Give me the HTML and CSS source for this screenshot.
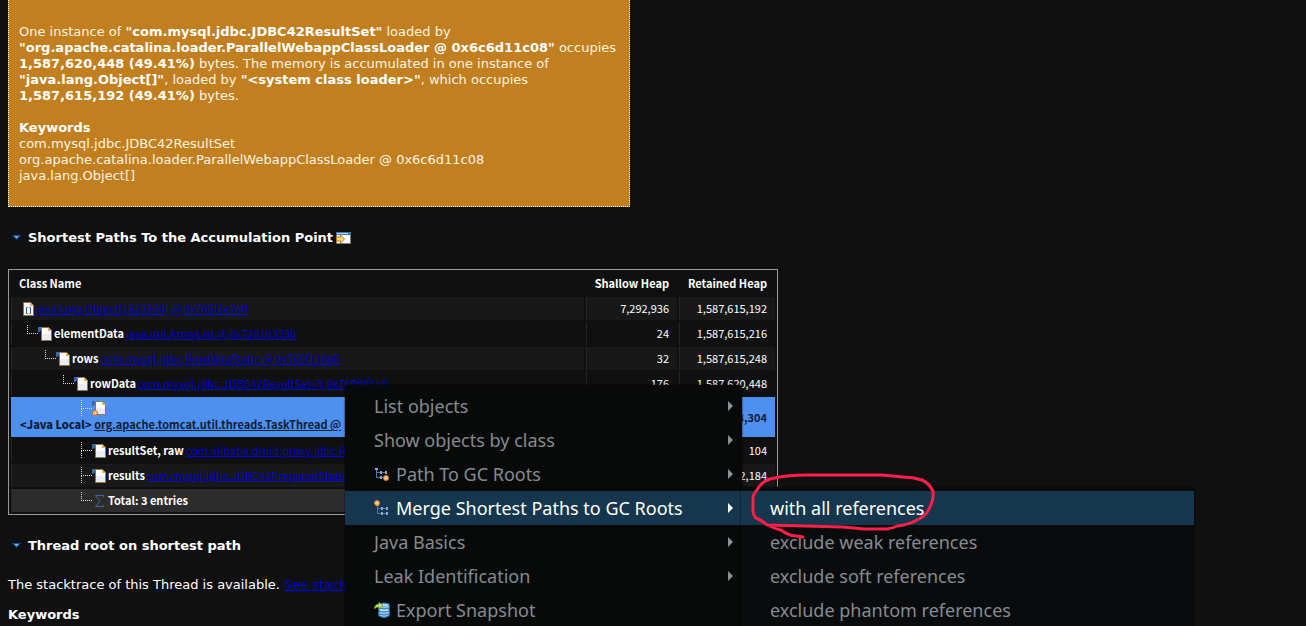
FILE: index.html
```
<!DOCTYPE html>
<html lang="en">
<head>
<meta charset="utf-8">
<title>Leak Suspects</title>
<link rel="stylesheet" href="styles.css">
</head>
<body>
<svg class="defs" aria-hidden="true">
  <symbol id="page" viewBox="0 0 18 16">
    <path d="M2 1h6v1L3 6H2z" fill="#2f6ca8"/>
    <path d="M5.500 1.500h7l3 3v10h-10z" fill="#e9edf8" stroke="#8d793f"/>
    <path d="M6 2h6v3h3v3H6z" fill="#fff"/>
    <path d="M12 1l4 4h-4z" fill="#e3b04b"/>
  </symbol>
  <symbol id="array" viewBox="0 0 18 16">
    <path d="M5.500 1.500h7l3 3v10h-10z" fill="#f4f6fc" stroke="#8d793f"/>
    <path d="M12 1l4 4h-4z" fill="#e3b04b"/>
    <path d="M9.500 6.500h-1v6h1M11.500 6.500h1v6h-1" fill="none" stroke="#1f5c99"/>
  </symbol>
  <symbol id="local" viewBox="0 0 18 16">
    <use href="#page"/>
    <circle cx="5" cy="13" r="2.500" fill="#ffc58a" stroke="#c96a14"/>
  </symbol>
  <symbol id="sigma" viewBox="0 0 18 16">
    <path d="M13.500 4V2.500h-8L10 8l-4.500 5.500h8V12" fill="none" stroke="#39699c"/>
  </symbol>
  <symbol id="twist" viewBox="0 0 9 5">
    <path d="M0 0h9L4.500 5z" fill="#0e4fa8"/><path d="M2 1h5L4.500 3.500z" fill="#62b4ea"/>
  </symbol>
  <symbol id="nodes" viewBox="0 0 12 12">
    <path d="M1.500 1v8.500h9M1.500 4.500h9" fill="none" stroke="#5c78a8"/>
    <path d="M0 0h3v2H0zM5 3h2v3H5zM10 3h2v3h-2zM5 8h2v3H5zM10 8h2v3h-2z" fill="#8ba4d0"/>
  </symbol>
</svg>

<main class="report">
  <section class="suspect">
    <p>One instance of <strong>"com.mysql.jdbc.JDBC42ResultSet"</strong> loaded by <strong>"org.apache.catalina.loader.ParallelWebappClassLoader @ 0x6c6d11c08"</strong> occupies <strong>1,587,620,448 (49.41%)</strong> bytes. The memory is accumulated in one instance of <strong>"java.lang.Object[]"</strong>, loaded by <strong>"&lt;system class loader&gt;"</strong>, which occupies <strong>1,587,615,192 (49.41%)</strong> bytes.</p>
    <p><strong>Keywords</strong><br>com.mysql.jdbc.JDBC42ResultSet<br>org.apache.catalina.loader.ParallelWebappClassLoader @ 0x6c6d11c08<br>java.lang.Object[]</p>
  </section>

  <h2 class="heading"><svg class="twist"><use href="#twist"/></svg>Shortest Paths To the Accumulation Point
    <svg class="open" viewBox="0 0 15 12"><path d="M.500.500h14v11H.500z" fill="#fff" stroke="#777b72"/><path d="M0 0h15v3H0z" fill="#3f78b9"/><path d="M1 1h11v1H1z" fill="#b9d8f4"/><path d="M.500 5v4h4v2l4-4-4-4v2z" fill="#ffd767" stroke="#b87914"/></svg>
  </h2>

  <table class="paths">
    <colgroup><col><col class="shallow"><col class="retained"></colgroup>
    <thead><tr><th>Class Name</th><th>Shallow Heap</th><th>Retained Heap</th></tr></thead>
    <tbody>
      <tr class="odd"><td><div class="node"><svg class="icon"><use href="#array"/></svg><a href="#o1">java.lang.Object[1823230] @ 0x765f1e7c0</a></div></td><td>7,292,936</td><td>1,587,615,192</td></tr>
      <tr><td><div class="node"><i class="elbow"></i><svg class="icon"><use href="#page"/></svg><b>elementData</b> <a href="#o2">java.util.ArrayList @ 0x726103330</a></div></td><td>24</td><td>1,587,615,216</td></tr>
      <tr class="odd"><td><div class="node"><i class="gap"></i><i class="elbow"></i><svg class="icon"><use href="#page"/></svg><b>rows</b> <a href="#o3">com.mysql.jdbc.RowDataStatic @ 0x765f110a0</a></div></td><td>32</td><td>1,587,615,248</td></tr>
      <tr><td><div class="node"><i class="gap"></i><i class="gap"></i><i class="elbow"></i><svg class="icon"><use href="#page"/></svg><b>rowData</b> <a href="#o4">com.mysql.jdbc.JDBC42ResultSet @ 0x765f0f1c8</a></div></td><td>176</td><td>1,587,620,448</td></tr>
      <tr class="selected"><td><div class="node"><i class="gap"></i><i class="gap"></i><i class="gap"></i><i class="tee"></i><svg class="icon"><use href="#local"/></svg></div><div class="thread"><b>&lt;Java Local&gt;</b> <a href="#o5">org.apache.tomcat.util.threads.TaskThread @</a></div></td><td></td><td>3,304</td></tr>
      <tr><td><div class="node"><i class="gap"></i><i class="gap"></i><i class="gap"></i><i class="tee"></i><svg class="icon"><use href="#page"/></svg><b>resultSet, raw</b> <a href="#o6">com.alibaba.druid.proxy.jdbc.ResultSet</a></div></td><td></td><td>104</td></tr>
      <tr class="odd"><td><div class="node"><i class="gap"></i><i class="gap"></i><i class="gap"></i><i class="tee"></i><svg class="icon"><use href="#page"/></svg><b>results</b> <a href="#o7">com.mysql.jdbc.JDBC42PreparedStatement</a></div></td><td></td><td>2,184</td></tr>
      <tr class="total"><td><div class="node"><i class="gap"></i><i class="gap"></i><i class="gap"></i><i class="elbow"></i><svg class="icon"><use href="#sigma"/></svg><b>Total: 3 entries</b></div></td><td></td><td></td></tr>
    </tbody>
  </table>

  <h2 class="heading"><svg class="twist"><use href="#twist"/></svg>Thread root on shortest path</h2>
  <p class="stack">The stacktrace of this Thread is available. <a href="#stack">See stacktrace</a></p>
  <p><strong>Keywords</strong></p>
</main>

<div class="menu main-menu" role="menu">
  <button role="menuitem" class="item more">List objects</button>
  <button role="menuitem" class="item more">Show objects by class</button>
  <button role="menuitem" class="item more"><svg class="glyph" viewBox="0 0 16 16"><use href="#nodes" x="1" y="2" width="12" height="12"/><circle cx="12" cy="12" r="2.500" fill="#ffc58a" stroke="#d9761b"/></svg>Path To GC Roots</button>
  <button role="menuitem" class="item more active"><svg class="glyph" viewBox="0 0 16 16"><use href="#nodes" x="2" y="4" width="12" height="12"/><circle cx="3" cy="3" r="2.500" fill="#ffc58a" stroke="#d9761b"/></svg>Merge Shortest Paths to GC Roots</button>
  <button role="menuitem" class="item more">Java Basics</button>
  <button role="menuitem" class="item more">Leak Identification</button>
  <button role="menuitem" class="item"><svg class="glyph" viewBox="0 0 16 16"><path d="M5 2q5-2 10 0l.500 3-.500 2 .500 3-.500 4q-5 3-10 0l-.500-3 .500-2-.500-3z" fill="#8fc5ef" stroke="#2f78b7"/><path d="M5 3q5 2 10 0M5 6q5 2 10 0M5 9q5 2 10 0M5 12q5 2 10 0" fill="none" stroke="#2f78b7"/><path d="M6 3q5 1 8 0M6 8q5 1 8 0" fill="none" stroke="#e8f6ff"/><path d="M0 7q1-5 5-5V0l4 4-4 3V5Q2 5 0 7z" fill="#c8e265" stroke="#4b8a2f" stroke-width=".7"/></svg>Export Snapshot</button>
</div>
<div class="menu sub-menu" role="menu">
  <button role="menuitem" class="item active">with all references</button>
  <button role="menuitem" class="item">exclude weak references</button>
  <button role="menuitem" class="item">exclude soft references</button>
  <button role="menuitem" class="item">exclude phantom references</button>
</div>
<svg class="marker" viewBox="750 470 186 70" aria-hidden="true"><path d="M803 537Q795 536 790 535Q785 533 781 530Q776 529 767 525L843 527Q855 528 863 529H887Q893 528 897 526Q908 525 917 520Q926 516 929 509Q934 500 933 491Q929 483 922 480Q913 477 903 477Q893 476 882 475H807Q785 475 770 479Q761 482 757 490Q753 494 753 499V511Q754 518 758 519Q763 521 767 525"/></svg>
</body>
</html>
```
FILE: styles.css
```
html { height: 100%; overflow: hidden; background: #101010; }
body { margin: 0; height: 100%; overflow: hidden; position: relative; color: #fff; font: 13px/16px "DejaVu Sans", sans-serif; }
p { margin: 0; }
a { color: #0000d0; text-decoration: underline; }
.defs { display: none; }
.report { padding: 0 8px; }

.suspect { box-sizing: border-box; max-width: 622px; padding: 24px 10px 22px; border: 1px dotted #fff; border-top: 0; background: #c17f20; color: #fff3e0; }
.suspect strong { color: #fff; }
.suspect p + p { margin-top: 16px; }

.heading { display: flex; align-items: center; margin: 22px 0 23px; padding-left: 4px; font-size: 13px; line-height: 17px; font-weight: bold; }
.twist { width: 9px; height: 5px; margin-right: 7px; }
.open { width: 15px; height: 12px; margin-left: 3px; }

.paths { table-layout: fixed; width: 770px; border: 1px solid #999; border-spacing: 2px; border-collapse: separate; font: 11px/19px "Noto Sans CJK SC", sans-serif; }
.shallow { width: 91px; }
.retained { width: 96px; }
.paths th, .paths td { box-sizing: border-box; height: 23px; padding: 0 8px 0 6px; border-left: 1px solid #262626; text-align: right; white-space: nowrap; overflow: hidden; }
.paths th { border-color: transparent; }
.paths th:first-child { text-align: left; padding-left: 7px; }
.paths td:first-child { text-align: left; }
.odd td { background: #181818; }
.total td { background: #2c2c2c; }
.paths .selected td { height: 40px; background: #4d90f0; border-color: #4d90f0; color: #101c30; font-weight: bold; }
.selected a { color: #101c30; }
.node { display: flex; align-items: center; height: 23px; }
.node b { margin-right: 2px; }
.selected .node { height: 22px; }
.thread { height: 18px; line-height: 11px; padding-left: 2px; }
.icon { flex: none; width: 18px; height: 16px; }
.gap, .elbow, .tee { flex: none; width: 18px; height: 23px; }
.elbow, .tee { display: flex; flex-direction: column; }
.elbow::before, .tee::before { content: ""; box-sizing: border-box; width: 11px; height: 9px; margin: 3px 0 0 9px; border: dotted #ddd; border-width: 0 0 1px 1px; }
.tee::after { content: ""; height: 7px; margin-left: 9px; border-left: 1px dotted #ddd; }

.stack { margin-bottom: 14px; }

.menu { position: absolute; box-sizing: border-box; padding-top: 4px; border-radius: 3px 3px 0 0; background: #080a0a; box-shadow: 0 0 2px #000; overflow: hidden; }
.main-menu { left: 345px; top: 385px; width: 397px; }
.sub-menu { left: 741px; top: 487px; width: 453px; background: #090b0d; }
.item { display: flex; align-items: center; width: 100%; height: 34px; padding: 0 9px 0 29px; border: 0; background: none; color: #858b90; font: 18px/34px "Noto Sans", sans-serif; text-align: left; white-space: nowrap; }
.more::after { content: ""; margin-left: auto; border: solid transparent; border-width: 5px 0 5px 5px; border-left-color: #8b9298; }
.active { background: #15364c; color: #fff; }
.active::after { border-left-color: #fff; }
.glyph { width: 16px; height: 16px; margin-right: 6px; }
.marker { position: absolute; left: 750px; top: 470px; width: 186px; height: 70px; pointer-events: none; }
.marker path { fill: none; stroke: #ff1f48; stroke-width: 3; stroke-linecap: round; stroke-linejoin: round; }
```
